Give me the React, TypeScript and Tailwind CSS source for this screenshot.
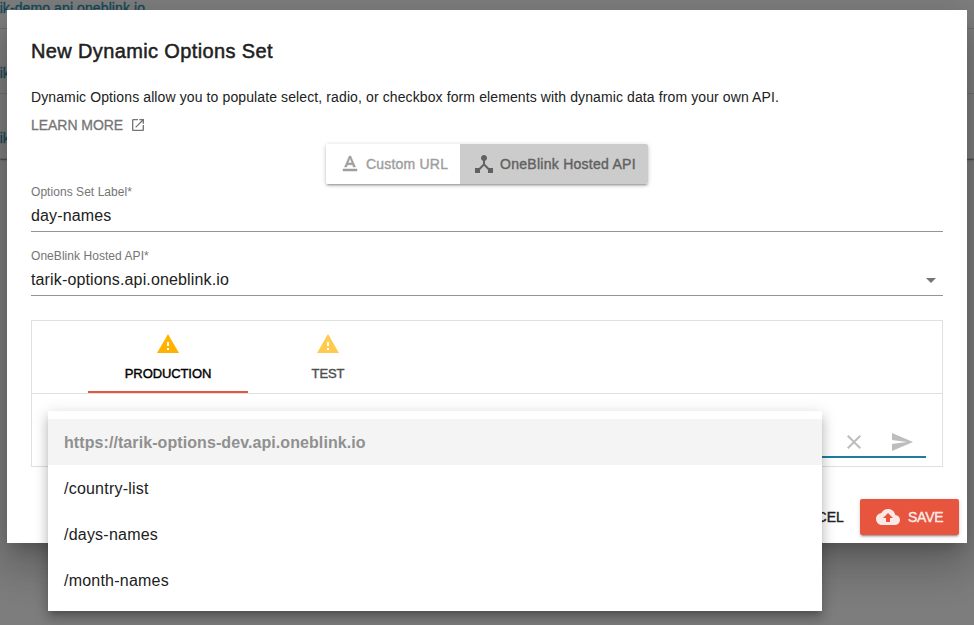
import React from 'react';

const paths = {
  openInNew:
    'M19 19H5V5h7V3H5c-1.11 0-2 .9-2 2v14c0 1.1.89 2 2 2h14c1.1 0 2-.9 2-2v-7h-2v7zM14 3v2h3.59l-9.83 9.83 1.41 1.41L19 6.41V10h2V3h-7z',
  textFormat:
    'M5 17v2h14v-2H5zm4.5-4.2h5l.9 2.2h2.1L12.75 4h-1.5L6.5 15h2.1l.9-2.2zM12 5.98L13.87 11h-3.74L12 5.98z',
  deviceHub:
    'M17 16l-4-4V8.82C14.16 8.4 15 7.3 15 6c0-1.66-1.34-3-3-3S9 4.34 9 6c0 1.3.84 2.4 2 2.82V12l-4 4H3v5h5v-3.05l4-4.2 4 4.2V21h5v-5h-4z',
  arrowDropDown: 'M7 10l5 5 5-5z',
  warning: 'M1 21h22L12 2 1 21zm12-3h-2v-2h2v2zm0-4h-2v-4h2v4z',
  clear:
    'M19 6.41L17.59 5 12 10.59 6.41 5 5 6.41 10.59 12 5 17.59 6.41 19 12 13.41 17.59 19 19 17.59 13.41 12z',
  send: 'M2.01 21L23 12 2.01 3 2 10l15 2-15 2z',
  cloudUpload:
    'M19.35 10.04C18.67 6.59 15.64 4 12 4 9.11 4 6.6 5.64 5.35 8.04 2.34 8.36 0 10.91 0 14c0 3.31 2.69 6 6 6h13c2.76 0 5-2.24 5-5 0-2.64-2.05-4.78-4.65-4.96zM14 13v4h-4v-4H7l5-5 5 5h-3z',
};

function Icon({ name, className = 'size-6' }: { name: keyof typeof paths; className?: string }) {
  return (
    <svg viewBox="0 0 24 24" fill="currentColor" className={`shrink-0 ${className}`}>
      <path d={paths[name]} />
    </svg>
  );
}

function Field({ label, value, select }: { label: string; value: string; select?: boolean }) {
  return (
    <div className="flex h-12 flex-col border-b border-[#949494]">
      <span className="h-4 text-[12px] leading-[17px] tracking-[0.05px] text-[#757575]">{label}</span>
      <div className="flex h-[31px] items-center justify-between">
        <span className="text-[16px] leading-5 tracking-[0.14px]">{value}</span>
        {select && <Icon name="arrowDropDown" className="size-6 text-[#757575]" />}
      </div>
    </div>
  );
}

function Tab({ label, active }: { label: string; active?: boolean }) {
  return (
    <div
      className={`flex h-[72px] w-40 flex-col items-center border-b-2 pt-[11px] ${
        active ? 'border-[#e8553e] text-black' : 'border-transparent text-[#4d4d4d]'
      }`}
    >
      <Icon name="warning" className={active ? 'size-6 text-[#ffb300]' : 'size-6 text-[#ffca4d]'} />
      <span className="mt-2 text-[13px] leading-5 tracking-[-0.1px] [-webkit-text-stroke:0.4px]">{label}</span>
    </div>
  );
}

const hosts = ['tarik-demo.api.oneblink.io', 'tarik-forms.api.oneblink.io', 'tarik-options.api.oneblink.io'];
const routes = ['/country-list', '/days-names', '/month-names'];

export default function App() {
  return (
    <div className="relative h-[625px] w-[974px] overflow-hidden bg-[#fafafa] font-['Liberation_Sans',Arial,sans-serif] text-[#212121]">
      <div className="bg-white shadow-[0_2px_1px_-1px_rgba(0,0,0,0.2),0_1px_1px_0_rgba(0,0,0,0.14),0_1px_3px_0_rgba(0,0,0,0.12)]">
        <div className="-mt-9">
          {hosts.map((host) => (
            <div
              key={host}
              className="-ml-[17px] flex h-[65px] items-center border-b border-[#e0e0e0] pt-6 text-[14px] tracking-[0.1px] text-[#2a93b5] [-webkit-text-stroke:0.3px]"
            >
              {host}
            </div>
          ))}
        </div>
      </div>

      <div className="absolute inset-0 bg-black/50" />

      <div
        role="dialog"
        className="absolute top-[10px] left-[7px] flex h-[533px] w-[960px] flex-col bg-white shadow-[0_11px_15px_-7px_rgba(0,0,0,0.2),0_24px_38px_3px_rgba(0,0,0,0.14),0_9px_46px_8px_rgba(0,0,0,0.12)]"
      >
        <div className="flex grow flex-col px-6">
          <h2 className="mt-[25px] text-[20px] leading-8 tracking-[0.37px] [-webkit-text-stroke:0.5px]">
            New Dynamic Options Set
          </h2>
          <p className="mt-5 text-[14px] leading-5 tracking-[0.11px]">
            Dynamic Options allow you to populate select, radio, or checkbox form elements with dynamic data from your
            own API.
          </p>
          <a className="mt-2 flex items-center gap-[7px] text-[14px] leading-5 text-[#757575]">
            <span className="tracking-[-0.04px] [-webkit-text-stroke:0.3px]">LEARN MORE</span>
            <Icon name="openInNew" className="size-4" />
          </a>

          <div className="mt-[9px] flex h-10 self-center rounded-[2px] text-[14px] tracking-[0.27px] shadow-[0_1px_5px_0_rgba(0,0,0,0.2),0_2px_2px_0_rgba(0,0,0,0.14),0_3px_1px_-2px_rgba(0,0,0,0.12)] [-webkit-text-stroke:0.4px]">
            <button className="flex w-[134px] items-center gap-1 rounded-l-[2px] bg-white pl-3 whitespace-nowrap text-[#9e9e9e]">
              <Icon name="textFormat" className="size-6 stroke-current stroke-[0.5]" />
              <span className="tracking-[0.2px]">Custom URL</span>
            </button>
            <button className="flex w-[188px] items-center gap-1 rounded-r-[2px] bg-[#cccccc] pl-3 whitespace-nowrap text-[#616161]">
              <Icon name="deviceHub" />
              <span>OneBlink Hosted API</span>
            </button>
          </div>

          <Field label="Options Set Label*" value="day-names" />
          <div className="h-4" />
          <Field label="OneBlink Hosted API*" value="tarik-options.api.oneblink.io" select />

          <div className="mt-6 h-[147px] border border-[#e0e0e0]">
            <div className="flex h-[73px] border-b border-[#e0e0e0] pl-14">
              <Tab label="PRODUCTION" active />
              <Tab label="TEST" />
            </div>
            <div className="mx-4 flex h-16 items-end justify-end gap-6 border-b-2 border-[#217c9c] pr-3 pb-0.5 text-[#bdbdbd]">
              <Icon name="clear" />
              <Icon name="send" />
            </div>
          </div>
        </div>

        <div className="flex h-[52px] items-start justify-end gap-2 pt-2 pr-2 text-[14px] tracking-[0.1px] [-webkit-text-stroke:0.4px]">
          <button className="h-9 px-2">CANCEL</button>
          <button className="flex h-9 w-[99px] items-center gap-2 rounded-[2px] bg-[#e8553e] pl-4 text-white/87 shadow-[0_3px_1px_-2px_rgba(0,0,0,0.2),0_2px_2px_0_rgba(0,0,0,0.14),0_1px_5px_0_rgba(0,0,0,0.12)]">
            <Icon name="cloudUpload" />
            <span className="tracking-[-0.25px]">SAVE</span>
          </button>
        </div>
      </div>

      <ul className="absolute top-[411px] left-12 w-[774px] bg-white py-2 text-[16px] tracking-[0.22px] shadow-[0_5px_5px_-3px_rgba(0,0,0,0.2),0_8px_10px_1px_rgba(0,0,0,0.14),0_3px_14px_2px_rgba(0,0,0,0.12)]">
        <li className="flex h-[46px] items-center bg-[#f4f4f4] px-4 pt-0.5 font-bold tracking-[0.08px] text-[#909090]">
          https://tarik-options-dev.api.oneblink.io
        </li>
        {routes.map((route) => (
          <li key={route} className="flex h-[46px] items-center px-4 pt-0.5">
            {route}
          </li>
        ))}
      </ul>
    </div>
  );
}
